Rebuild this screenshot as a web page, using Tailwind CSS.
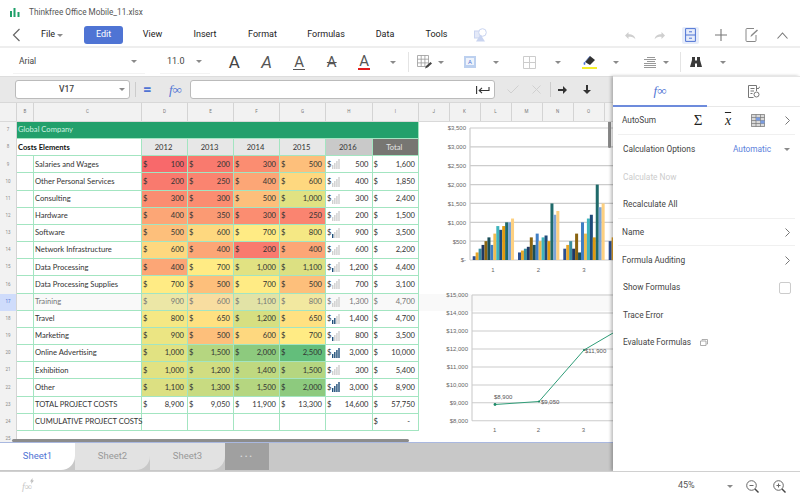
<!DOCTYPE html>
<html>
<head>
<meta charset="utf-8">
<script src="https://cdn.jsdelivr.net/npm/@tailwindcss/browser@4"></script>
</head>
<body class="m-0 bg-white">
<svg class="hidden">
  <symbol id="caret" viewBox="0 0 8 4"><path d="M0 0h8L4 4z" fill="#8a8a8a"/></symbol>
  <symbol id="b0" viewBox="0 0 8 10"><path d="M0 6h1.400v4H0zM2.100 4h1.400v6H2.100zM4.200 2h1.400v8H4.200zM6.300 0h1.400v10H6.300z" fill="#cfcfcf"/></symbol>
  <symbol id="b1" viewBox="0 0 8 10"><path d="M2.100 4h1.400v6H2.100zM4.200 2h1.400v8H4.200zM6.300 0h1.400v10H6.300z" fill="#cfcfcf"/><path d="M0 6h1.400v4H0z" fill="#1f4e79"/></symbol>
  <symbol id="b2" viewBox="0 0 8 10"><path d="M4.200 2h1.400v8H4.200zM6.300 0h1.400v10H6.300z" fill="#cfcfcf"/><path d="M0 6h1.400v4H0zM2.100 4h1.400v6H2.100z" fill="#1f4e79"/></symbol>
  <symbol id="b4" viewBox="0 0 8 10"><path d="M0 6h1.400v4H0zM2.100 4h1.400v6H2.100zM4.200 2h1.400v8H4.200zM6.300 0h1.400v10H6.300z" fill="#1f4e79"/></symbol>
</svg>
<div class="w-[800px] h-[500px] overflow-hidden flex flex-col font-['Roboto',sans-serif] text-[#333]">

  <!-- title -->
  <div class="h-[24px] flex items-center shrink-0">
    <svg class="ml-[10px] w-[10px] h-[9px] mt-[1px]" viewBox="0 0 10 9"><path d="M0 3h2v6H0zM3.500 0h2v9h-2zM7.500 4h2v5h-2z" fill="#1fa06a"/></svg>
    <span class="ml-[9px] text-[8.200px] text-[#555]">Thinkfree Office Mobile_11.xlsx</span>
  </div>

  <!-- menu -->
  <div class="h-[24px] shrink-0 flex items-center text-[9px] text-[#222] border-b-2 border-[#eeeeee]">
    <svg class="ml-[12px] w-[9px] h-[14px]" viewBox="0 0 9 14"><path d="M7.500 1 1.500 7l6 6" fill="none" stroke="#666" stroke-width="1.200"/></svg>
    <span class="ml-[20px] w-[16px]">File</span>
    <svg class="w-[6px] h-[3px]"><use href="#caret"/></svg>
    <span class="ml-[21px] w-[39px] h-[18px] rounded-[3px] bg-[#4f74d4] text-white flex items-center justify-center">Edit</span>
    <span class="w-[59px] text-center">View</span>
    <span class="w-[46px] text-center">Insert</span>
    <span class="w-[69px] text-center">Format</span>
    <span class="w-[58px] text-center">Formulas</span>
    <span class="w-[60px] text-center">Data</span>
    <span class="w-[43px] text-center">Tools</span>
    <svg class="ml-[16px] w-[13px] h-[14px]" viewBox="0 0 13 14"><rect x="0.500" y="3" width="7" height="7" fill="#e4e9f8" stroke="#c9d4f0"/><circle cx="8.500" cy="4.500" r="3.800" fill="#fff" stroke="#c9d4f0"/><path d="M6.500 6.500 11 13.500H2z" fill="#c9d4f0"/></svg>
    <div class="ml-auto flex items-center pr-[3px]">
      <div class="w-[30px] flex justify-center"><svg class="w-[12px] h-[9px]" viewBox="0 0 12 9"><path d="M1 4.500 4.500 1v2.200c4 0 6.500 1.600 6.800 5C9.800 6.200 8 5.700 4.500 5.700V8z" fill="#cfcfcf"/></svg></div>
      <div class="w-[30px] flex justify-center"><svg class="w-[12px] h-[9px]" viewBox="0 0 12 9"><path d="M11 4.500 7.500 1v2.200c-4 0-6.500 1.600-6.800 5C2.200 6.200 4 5.700 7.500 5.700V8z" fill="#cfcfcf"/></svg></div>
      <div class="w-[30px] flex justify-center"><div class="w-[17px] h-[17px] rounded-[2px] bg-[#e6ecfa] flex items-center justify-center"><svg class="w-[11px] h-[14px]" viewBox="0 0 11 14"><path d="M.6.600h9.800v12.800H.6zM.6 7h9.800M4 3.800h3M4 10.200h3" fill="none" stroke="#4f74d4"/></svg></div></div>
      <div class="w-[31px] flex justify-center"><svg class="w-[12px] h-[12px]" viewBox="0 0 12 12"><path d="M6 0v12M0 6h12" stroke="#777" stroke-width="1.100"/></svg></div>
      <div class="w-[31px] flex justify-center"><svg class="w-[13px] h-[14px]" viewBox="0 0 13 14"><path d="M11 7v5.500a1 1 0 0 1-1 1H2a1 1 0 0 1-1-1V1.500a1 1 0 0 1 1-1h7" fill="none" stroke="#888"/><path d="M5.500 9 6 7l6-5.500 1 1L7 8z" fill="#888"/></svg></div>
      <div class="w-[30px] flex justify-center"><svg class="w-[11px] h-[7px]" viewBox="0 0 11 7"><path d="m.5 6.500 5-5.500 5 5.500" fill="none" stroke="#777" stroke-width="1.100"/></svg></div>
    </div>
  </div>

  <!-- toolbar -->
  <div class="h-[28px] shrink-0 flex items-center text-[8.500px] text-[#444]">
    <div class="ml-[13px] w-[132px] h-[24px] flex items-center justify-between pl-[6px] pr-[8px] border-b border-[#f3f3f3]"><span>Arial</span><svg class="w-[6px] h-[3px]"><use href="#caret"/></svg></div>
    <div class="ml-[15px] w-[50px] h-[24px] flex items-center justify-between pl-[7px] pr-[8px] border-b border-[#f3f3f3]"><span class="text-[9px]">11.0</span><svg class="w-[6px] h-[3px]"><use href="#caret"/></svg></div>
    <div class="ml-[8px] w-[32.500px] text-center text-[17px] leading-none text-[#444]">A</div>
    <div class="w-[32.500px] text-center text-[17px] leading-none italic text-[#555]">A</div>
    <div class="w-[32.500px] flex justify-center"><span class="text-[15px] leading-[14px] text-[#555] border-b border-[#555] px-[1px]">A</span></div>
    <div class="w-[32.500px] text-center text-[15px] leading-none line-through text-[#555]">A</div>
    <div class="w-[32.500px] flex justify-center"><span class="text-[15px] leading-[14px] text-[#555] border-b-2 border-[#e21b1b] px-[1px]">A</span></div>
    <div class="w-[24px] flex justify-center"><svg class="w-[6px] h-[3px]"><use href="#caret"/></svg></div>
    <div class="ml-[3.500px] w-px h-[20px] bg-[#e4e4e4]"></div>
    <svg class="ml-[8px] w-[16px] h-[15px]" viewBox="0 0 16 15"><path d="M.5.500h11v11H.5zM4.200.500v11M7.900.500v11M.5 4.200h11M.5 7.900h11" fill="none" stroke="#999" stroke-width=".8"/><path d="m8 13.500 1-2.500 4.500-4 1.500 1.500-4.500 4z" fill="#444"/></svg>
    <div class="w-[15px] flex justify-center"><svg class="w-[6px] h-[3px]"><use href="#caret"/></svg></div>
    <svg class="ml-[16px] w-[12px] h-[12px]" viewBox="0 0 12 12"><path d="M0 0h12v12H0z" fill="#bcd0ef"/><path d="M2 2h8v7H2z" fill="#eef3fb"/><text x="6" y="8" text-anchor="middle" font-size="6" fill="#4f74d4">A</text></svg>
    <svg class="ml-[17px] w-[6px] h-[3px]"><use href="#caret"/></svg>
    <svg class="ml-[24px] w-[13px] h-[13px]" viewBox="0 0 13 13"><path d="M.5.500h12v12H.5zM6.500.500v12M.5 6.500h12" fill="none" stroke="#ccc"/></svg>
    <svg class="ml-[19px] w-[6px] h-[3px]"><use href="#caret"/></svg>
    <div class="ml-[21px] w-[15px] flex flex-col items-center"><svg class="w-[13px] h-[11px]" viewBox="0 0 13 11"><path d="m2 7 5-6 5 4-5 5z" fill="#333"/><path d="M1.500 10c-.8-1-.8-2 0-3 .8 1 .8 2 0 3zM2 7l5-6" fill="#4f74d4" stroke="#4f74d4" stroke-width=".6"/></svg><div class="w-[15px] h-[2px] bg-[#f4ee2a] mt-[1px]"></div></div>
    <svg class="ml-[16px] w-[6px] h-[3px]"><use href="#caret"/></svg>
    <svg class="ml-[25px] w-[12px] h-[11px]" viewBox="0 0 12 11"><path d="M3 .5h8M0 2.500h12M3 4.500h8M0 6.500h12M0 8.500h12M0 10.500h12" stroke="#999"/></svg>
    <svg class="ml-[7px] w-[6px] h-[3px]"><use href="#caret"/></svg>
    <div class="ml-[11px] w-px h-[20px] bg-[#e4e4e4]"></div>
    <svg class="ml-[8px] w-[14px] h-[11px]" viewBox="0 0 12 11"><path d="M2 0h3v3.500h2V0h3v3l2 7H7V6.500H5V10H0l2-7z" fill="#3a3a3a"/></svg>
    <svg class="ml-[17px] w-[6px] h-[3px]"><use href="#caret"/></svg>
  </div>

  <!-- main -->
  <div class="flex flex-1 min-h-0">
    <div class="w-[613px] shrink-0 flex flex-col min-h-0">
      <!-- formula bar -->
      <div class="h-[27px] shrink-0 flex items-center bg-[#e8e8e8] border-t border-[#dddddd] border-b border-b-[#d8d8d8]">
        <div class="ml-[15px] w-[115px] h-[19px] bg-white rounded-[3px] border border-[#bbbbbb] flex items-center text-[8.500px] font-medium text-[#444] relative"><span class="w-full text-center pr-[12px]">V17</span><svg class="absolute right-[4px] top-[7px] w-[6px] h-[3px]"><use href="#caret"/></svg></div>
        <div class="ml-[5px] w-px h-[15px] bg-[#cccccc]"></div>
        <span class="ml-[7px] w-[10px] text-[15px] leading-none text-[#4f74d4] font-bold">=</span>
        <span class="ml-[16px] w-[18px] text-[13px] italic text-[#4f74d4] font-['Liberation_Serif',serif] whitespace-nowrap">f∞</span>
        <div class="ml-[3px] w-[305px] h-[19px] bg-white rounded-[3px] border border-[#bbbbbb] flex items-center justify-end pr-[4px]"><svg class="w-[14px] h-[8px]" viewBox="0 0 14 8"><path d="M.6 0v8M13 1v3.500H3.500M6 1.800 3.200 4.500 6 7.200" fill="none" stroke="#333" stroke-width="1.100"/></svg></div>
        <svg class="ml-[12px] w-[12px] h-[9px]" viewBox="0 0 12 9"><path d="m.5 4.500 3.500 3.500 7.500-7.500" fill="none" stroke="#d0d0d0"/></svg>
        <svg class="ml-[13px] w-[9px] h-[9px]" viewBox="0 0 9 9"><path d="m.5.500 8 8M8.500.500l-8 8" fill="none" stroke="#d0d0d0"/></svg>
        <div class="ml-[9px] w-px h-[15px] bg-[#cccccc]"></div>
        <svg class="ml-[7px] w-[9px] h-[8px]" viewBox="0 0 9 8"><path d="M0 3h5V0l4 4-4 4V5H0z" fill="#333"/></svg>
        <svg class="ml-[16px] w-[8px] h-[9px]" viewBox="0 0 8 9"><path d="M3 0v5H0l4 4 4-4H5V0z" fill="#333"/></svg>
      </div>
      <!-- column header -->
      <div class="h-[19px] shrink-0 flex bg-[#f2f2f2] border-b border-[#d9d9d9] text-[4.500px] text-[#777] [&>div]:flex [&>div]:items-center [&>div]:justify-center [&>div]:border-r [&>div]:border-[#d4d4d4]">
        <div class="w-[17px]"></div><div class="w-[17px]">B</div><div class="w-[108px]">C</div><div class="w-[46px]">D</div><div class="w-[46px]">E</div><div class="w-[46px]">F</div><div class="w-[46px]">G</div><div class="w-[46.500px]">H</div><div class="w-[46.500px]">I</div><div class="w-[30.500px]">J</div><div class="w-[31px]">K</div><div class="w-[31px]">L</div><div class="w-[31px]">M</div><div class="w-[31px]">N</div><div class="w-[31px]">O</div>
      </div>
      <!-- sheet -->
      <div class="relative flex flex-1 min-h-0 overflow-hidden">
        <div class="w-[17px] shrink-0 bg-[#f2f2f2] border-r border-[#d4d4d4] flex flex-col text-[4.500px] text-[#888] [&>div]:h-[17.170px] [&>div]:shrink-0 [&>div]:flex [&>div]:items-center [&>div]:justify-center">
          <div>7</div><div>8</div><div>9</div><div>10</div><div>11</div><div>12</div><div>13</div><div>14</div><div>15</div><div>16</div><div class="bg-[#cfdcfb] text-[#4f74d4]">17</div><div>18</div><div>19</div><div>20</div><div>21</div><div>22</div><div>23</div><div>24</div><div>25</div>
        </div>
        <div class="relative w-[402px] shrink-0 self-start grid grid-cols-[17px_108px_46px_46px_46px_46px_46.500px_46.500px] auto-rows-[17.170px] font-['Lato',sans-serif] text-[7.600px] text-[#333] [&>div]:flex [&>div]:items-center [&>div]:justify-between [&>div]:pl-[1px] [&>div]:pr-[3px] [&>div]:border-r [&>div]:border-b [&>div]:border-[#a3e5c1] [&>div]:whitespace-nowrap">
          <div class="col-span-8 bg-[#22a06b] text-[#cdf1e0]">Global Company</div>
          <div class="col-span-2 font-bold text-[#111]">Costs Elements</div>
          <div class="bg-[#e7e7e7] justify-center!">2012</div><div class="bg-[#e7e7e7] justify-center!">2013</div><div class="bg-[#e7e7e7] justify-center!">2014</div><div class="bg-[#e7e7e7] justify-center!">2015</div><div class="bg-[#c9c9c9] justify-center!">2016</div><div class="bg-[#777672] text-[#e4e4e4] justify-center!">Total</div>

          <div></div><div>Salaries and Wages</div><div class="bg-[#f8696b]"><span>$</span><span>100</span></div><div class="bg-[#f97a6e]"><span>$</span><span>200</span></div><div class="bg-[#fb8d71]"><span>$</span><span>300</span></div><div class="bg-[#fdbf7b]"><span>$</span><span>500</span></div><div><span class="flex items-center gap-[1px]">$<svg class="w-[8px] h-[10px]"><use href="#b0"/></svg></span><span>500</span></div><div><span>$</span><span>1,600</span></div>

          <div></div><div>Other Personal Services</div><div class="bg-[#f97a6e]"><span>$</span><span>200</span></div><div class="bg-[#fa8470]"><span>$</span><span>250</span></div><div class="bg-[#fca676]"><span>$</span><span>400</span></div><div class="bg-[#fed87f]"><span>$</span><span>600</span></div><div><span class="flex items-center gap-[1px]">$<svg class="w-[8px] h-[10px]"><use href="#b0"/></svg></span><span>400</span></div><div><span>$</span><span>1,850</span></div>

          <div></div><div>Consulting</div><div class="bg-[#fb8d71]"><span>$</span><span>300</span></div><div class="bg-[#fb8d71]"><span>$</span><span>300</span></div><div class="bg-[#fdbf7b]"><span>$</span><span>500</span></div><div class="bg-[#e1e282]"><span>$</span><span>1,000</span></div><div><span class="flex items-center gap-[1px]">$<svg class="w-[8px] h-[10px]"><use href="#b0"/></svg></span><span>300</span></div><div><span>$</span><span>2,400</span></div>

          <div></div><div>Hardware</div><div class="bg-[#fca676]"><span>$</span><span>400</span></div><div class="bg-[#fb9a73]"><span>$</span><span>350</span></div><div class="bg-[#fb8d71]"><span>$</span><span>300</span></div><div class="bg-[#fa8470]"><span>$</span><span>250</span></div><div><span class="flex items-center gap-[1px]">$<svg class="w-[8px] h-[10px]"><use href="#b0"/></svg></span><span>200</span></div><div><span>$</span><span>1,500</span></div>

          <div></div><div>Software</div><div class="bg-[#fdbf7b]"><span>$</span><span>500</span></div><div class="bg-[#fed87f]"><span>$</span><span>600</span></div><div class="bg-[#ffeb84]"><span>$</span><span>700</span></div><div class="bg-[#f5e884]"><span>$</span><span>800</span></div><div><span class="flex items-center gap-[1px]">$<svg class="w-[8px] h-[10px]"><use href="#b1"/></svg></span><span>900</span></div><div><span>$</span><span>3,500</span></div>

          <div></div><div>Network Infrastructure</div><div class="bg-[#fed87f]"><span>$</span><span>600</span></div><div class="bg-[#fca676]"><span>$</span><span>400</span></div><div class="bg-[#f97a6e]"><span>$</span><span>200</span></div><div class="bg-[#fca676]"><span>$</span><span>400</span></div><div><span class="flex items-center gap-[1px]">$<svg class="w-[8px] h-[10px]"><use href="#b0"/></svg></span><span>600</span></div><div><span>$</span><span>2,200</span></div>

          <div></div><div>Data Processing</div><div class="bg-[#fca676]"><span>$</span><span>400</span></div><div class="bg-[#ffeb84]"><span>$</span><span>700</span></div><div class="bg-[#e1e282]"><span>$</span><span>1,000</span></div><div class="bg-[#dce082]"><span>$</span><span>1,100</span></div><div><span class="flex items-center gap-[1px]">$<svg class="w-[8px] h-[10px]"><use href="#b1"/></svg></span><span>1,200</span></div><div><span>$</span><span>4,400</span></div>

          <div></div><div>Data Processing Supplies</div><div class="bg-[#ffeb84]"><span>$</span><span>700</span></div><div class="bg-[#fdbf7b]"><span>$</span><span>500</span></div><div class="bg-[#ffeb84]"><span>$</span><span>700</span></div><div class="bg-[#fdbf7b]"><span>$</span><span>500</span></div><div><span class="flex items-center gap-[1px]">$<svg class="w-[8px] h-[10px]"><use href="#b0"/></svg></span><span>700</span></div><div><span>$</span><span>3,100</span></div>

          <div class="bg-[#f9f9f9]"></div><div class="bg-[#f9f9f9] text-[#777]">Training</div><div class="bg-[#ece7a6] text-[#777]"><span>$</span><span>900</span></div><div class="bg-[#f8dda0] text-[#777]"><span>$</span><span>600</span></div><div class="bg-[#e2e3a6] text-[#777]"><span>$</span><span>1,100</span></div><div class="bg-[#f2e8a0] text-[#777]"><span>$</span><span>800</span></div><div class="bg-[#f9f9f9] text-[#777]"><span class="flex items-center gap-[1px]">$<svg class="w-[8px] h-[10px]"><use href="#b0"/></svg></span><span>1,300</span></div><div class="bg-[#f9f9f9] text-[#777]"><span>$</span><span>4,700</span></div>

          <div></div><div>Travel</div><div class="bg-[#f5e884]"><span>$</span><span>800</span></div><div class="bg-[#ffe181]"><span>$</span><span>650</span></div><div class="bg-[#d7df81]"><span>$</span><span>1,200</span></div><div class="bg-[#ffe181]"><span>$</span><span>650</span></div><div><span class="flex items-center gap-[1px]">$<svg class="w-[8px] h-[10px]"><use href="#b2"/></svg></span><span>1,400</span></div><div><span>$</span><span>4,700</span></div>

          <div></div><div>Marketing</div><div class="bg-[#ebe583]"><span>$</span><span>900</span></div><div class="bg-[#fdbf7b]"><span>$</span><span>500</span></div><div class="bg-[#fed87f]"><span>$</span><span>600</span></div><div class="bg-[#ffeb84]"><span>$</span><span>700</span></div><div><span class="flex items-center gap-[1px]">$<svg class="w-[8px] h-[10px]"><use href="#b1"/></svg></span><span>800</span></div><div><span>$</span><span>3,500</span></div>

          <div></div><div>Online Advertising</div><div class="bg-[#e1e282]"><span>$</span><span>1,000</span></div><div class="bg-[#b5d680]"><span>$</span><span>1,500</span></div><div class="bg-[#8dca7e]"><span>$</span><span>2,000</span></div><div class="bg-[#63be7b]"><span>$</span><span>2,500</span></div><div><span class="flex items-center gap-[1px]">$<svg class="w-[8px] h-[10px]"><use href="#b4"/></svg></span><span>3,000</span></div><div><span>$</span><span>10,000</span></div>

          <div></div><div>Exhibition</div><div class="bg-[#e1e282]"><span>$</span><span>1,000</span></div><div class="bg-[#d1dd81]"><span>$</span><span>1,200</span></div><div class="bg-[#bfd980]"><span>$</span><span>1,400</span></div><div class="bg-[#b5d680]"><span>$</span><span>1,500</span></div><div><span class="flex items-center gap-[1px]">$<svg class="w-[8px] h-[10px]"><use href="#b0"/></svg></span><span>300</span></div><div><span>$</span><span>5,400</span></div>

          <div></div><div>Other</div><div class="bg-[#dce082]"><span>$</span><span>1,100</span></div><div class="bg-[#c8db81]"><span>$</span><span>1,300</span></div><div class="bg-[#b5d680]"><span>$</span><span>1,500</span></div><div class="bg-[#8dca7e]"><span>$</span><span>2,000</span></div><div><span class="flex items-center gap-[1px]">$<svg class="w-[8px] h-[10px]"><use href="#b4"/></svg></span><span>3,000</span></div><div><span>$</span><span>8,900</span></div>

          <div></div><div>TOTAL PROJECT COSTS</div><div><span>$</span><span>8,900</span></div><div><span>$</span><span>9,050</span></div><div><span>$</span><span>11,900</span></div><div><span>$</span><span>13,300</span></div><div><span>$</span><span>14,600</span></div><div><span>$</span><span>57,750</span></div>

          <div></div><div>CUMULATIVE PROJECT COSTS</div><div></div><div></div><div></div><div></div><div></div><div class="pr-[8px]!"><span>$</span><span>-</span></div>
        </div>

        <!-- selected row band and floating charts -->
        <div class="flex-1 relative">
          <div class="absolute left-0 right-0 top-[171.700px] h-[17.170px] bg-[#f9f9f9]"></div>
          <svg class="absolute left-0 top-0 w-[194px] h-[340px]" viewBox="419 122 194 340" font-family="Liberation Sans, sans-serif">
            <g stroke="#cccccc" stroke-width="1.200">
              <path d="M470 128H613M470 146.900H613M470 165.700H613M470 184.600H613M470 203.400H613M470 222.300H613M470 241.100H613M470 260H613M470 128V260" fill="none"/>
            </g>
            <g font-size="6" fill="#666" text-anchor="end">
              <text x="466" y="130">$3,500</text><text x="466" y="149">$3,000</text><text x="466" y="168">$2,500</text><text x="466" y="187">$2,000</text><text x="466" y="205.500">$1,500</text><text x="466" y="224.500">$1,000</text><text x="466" y="243.500">$500</text><text x="466" y="262">$-</text>
            </g>
            <g font-size="6" fill="#666" text-anchor="middle"><text x="493" y="272">1</text><text x="538.500" y="272">2</text><text x="584" y="272">3</text></g>
            <g transform="translate(0,260) scale(1,-0.0377)">
              <g fill="#2a4d8f"><rect x="472.700" width="3" height="100"/><rect x="518" width="3" height="200"/><rect x="563.300" width="3" height="300"/><rect x="608.700" width="3" height="500"/></g>
              <g fill="#e8a72a"><rect x="475.650" width="3" height="200"/><rect x="520.950" width="3" height="250"/><rect x="566.250" width="3" height="400"/><rect x="611.650" width="2" height="600"/></g>
              <g fill="#3a8fa0"><rect x="478.600" width="3" height="300"/><rect x="523.900" width="3" height="300"/><rect x="569.200" width="3" height="500"/></g>
              <g fill="#1f3864"><rect x="481.550" width="3" height="400"/><rect x="526.850" width="3" height="350"/><rect x="572.150" width="3" height="300"/></g>
              <g fill="#8a6410"><rect x="484.500" width="3" height="500"/><rect x="529.800" width="3" height="600"/><rect x="575.100" width="3" height="700"/></g>
              <g fill="#1b4e58"><rect x="487.450" width="3" height="600"/><rect x="532.750" width="3" height="400"/><rect x="578.050" width="3" height="200"/></g>
              <g fill="#3f7ec4"><rect x="490.400" width="3" height="400"/><rect x="535.700" width="3" height="700"/><rect x="581" width="3" height="1000"/></g>
              <g fill="#f0bc50"><rect x="493.350" width="3" height="700"/><rect x="538.650" width="3" height="500"/><rect x="583.950" width="3" height="700"/></g>
              <g fill="#3eb4bc"><rect x="496.300" width="3" height="900"/><rect x="541.600" width="3" height="600"/><rect x="586.900" width="3" height="1100"/></g>
              <g fill="#1f4a7a"><rect x="499.250" width="3" height="800"/><rect x="544.550" width="3" height="650"/><rect x="589.850" width="3" height="1200"/></g>
              <g fill="#e09a10"><rect x="502.200" width="3" height="900"/><rect x="547.500" width="3" height="500"/><rect x="592.800" width="3" height="600"/></g>
              <g fill="#1f6a6a"><rect x="505.150" width="3" height="1000"/><rect x="550.450" width="3" height="1500"/><rect x="595.750" width="3" height="2000"/></g>
              <g fill="#7ea6d8"><rect x="508.100" width="3" height="1000"/><rect x="553.400" width="3" height="1200"/><rect x="598.700" width="3" height="1400"/></g>
              <g fill="#fdd080"><rect x="511.050" width="3" height="1100"/><rect x="556.350" width="3" height="1300"/><rect x="601.650" width="3" height="1500"/></g>
            </g>

            <g stroke="#cccccc" stroke-width="1.100" fill="none">
              <path d="M472 295H613M472 313H613M472 331H613M472 349H613M472 367H613M472 385H613M472 402.700H613M472 420.700H613M472 295V420.700"/>
            </g>
            <g font-size="6" fill="#666" text-anchor="end">
              <text x="468" y="297">$15,000</text><text x="468" y="315">$14,000</text><text x="468" y="333">$13,000</text><text x="468" y="351">$12,000</text><text x="468" y="369">$11,000</text><text x="468" y="387">$10,000</text><text x="468" y="404.700">$9,000</text><text x="468" y="422.700">$8,000</text>
            </g>
            <g font-size="6" fill="#666" text-anchor="middle"><text x="494.700" y="432">1</text><text x="538.300" y="432">2</text><text x="583.500" y="432">3</text></g>
            <path d="M495 404.500 539 401.500 584 350 613 333" fill="none" stroke="#2f9d78" stroke-width="1"/>
            <circle cx="495" cy="404.500" r="1.400" fill="#1f8a68"/><circle cx="539" cy="401.500" r="1.100" fill="#1f8a68"/><circle cx="584" cy="350" r="1.100" fill="#1f8a68"/>
            <g font-size="6" fill="#555"><text x="494" y="399">$8,900</text><text x="541" y="404">$9,050</text><text x="585" y="353">$11,900</text></g>
          </svg>
          <div class="absolute left-[189px] top-[-10px] w-[3px] h-[36px] bg-[#8a8a8a] rounded-full"></div>
        </div>
        <!-- horizontal scrollbar -->
        <div class="absolute left-[12px] top-[317px] w-[397px] h-[2.500px] bg-[#8c8c8c] rounded-full"></div>
        <!-- tabs -->
        <div class="absolute left-0 right-0 bottom-0 h-[29px] bg-[#c8c8c8] border-t border-[#a9b8e0] flex text-[9.500px] [&>div]:h-[27px] [&>div]:w-[75px] [&>div]:flex [&>div]:items-center [&>div]:justify-center [&>div]:rounded-br-[14px]">
          <div class="bg-white text-[#4f74d4]">Sheet1</div>
          <div class="bg-[#e2e2e2] text-[#999]">Sheet2</div>
          <div class="bg-[#e2e2e2] text-[#999]">Sheet3</div>
          <div class="w-[44px]! bg-[#a0a0a0] text-[#d8d8d8] rounded-none! tracking-[2px] text-[8px]">•••</div>
        </div>
      </div>
    </div>

    <!-- side panel -->
    <div class="w-[187px] shrink-0 relative bg-white shadow-[-2px_0_3px_rgba(0,0,0,0.25)] flex flex-col text-[8.300px] text-[#444] border-t border-[#e6e6e6]">
      <div class="h-[30px] shrink-0 flex border-b border-[#e8e8e8]">
        <div class="w-[94px] h-[30px] flex items-center justify-center border-b-2 border-[#6d8bdc]"><span class="text-[13px] italic text-[#4f74d4] font-['Liberation_Serif',serif]">f∞</span></div>
        <div class="flex-1 flex items-center justify-center"><svg class="w-[12px] h-[13px]" viewBox="0 0 12 13"><path d="M8.500 6V.5H.5v12h5M2.500 3.500h4M2.500 6h3.500M2.500 8.500h2" fill="none" stroke="#777"/><circle cx="8.500" cy="9.500" r="2.500" fill="none" stroke="#777"/><path d="m9 3 1 1 2-2.500" fill="none" stroke="#777"/></svg></div>
      </div>
      <div class="mx-[5px] h-[28px] shrink-0 flex items-center border-b border-[#f0f0f0] pl-[4px]">
        <span class="w-[69px]">AutoSum</span>
        <span class="w-[14px] text-center text-[15px] font-['Liberation_Serif',serif] text-[#222]">Σ</span>
        <span class="ml-[16px] w-[14px] text-center text-[14px] italic font-['Liberation_Serif',serif] text-[#222] overline">x</span>
        <svg class="ml-[16px] w-[14px] h-[13px]" viewBox="0 0 14 13"><path d="M0 0h14v13H0z" fill="#d8d8d8"/><path d="M.5.500h13v12H.5zM.5 3.500h13M.5 6.500h13M.5 9.500h13M5 .5v12M9.500.500v12" fill="none" stroke="#777" stroke-width=".7"/><path d="M5 3.500h4v3H5zM9.500 6.500h4v3h-4z" fill="#7a9ce0"/></svg>
        <svg class="ml-[19.500px] w-[5px] h-[9px]" viewBox="0 0 5 9"><path d="m.5.500 4 4-4 4" fill="none" stroke="#777"/></svg>
      </div>
      <div class="h-[28px] shrink-0 flex items-center pl-[10px]"><span class="w-[110px]">Calculation Options</span><span class="w-[51px] text-[#5d7fdc]">Automatic</span><svg class="w-[6px] h-[3px]"><use href="#caret"/></svg></div>
      <div class="h-[28px] shrink-0 flex items-center pl-[10px] text-[#cccccc]">Calculate Now</div>
      <div class="mx-[5px] h-[28px] shrink-0 flex items-center pl-[5px] border-b border-[#f0f0f0]">Recalculate All</div>
      <div class="mx-[5px] h-[27px] shrink-0 flex items-center justify-between pl-[4px] pr-[5.500px] border-b border-[#f0f0f0]"><span>Name</span><svg class="w-[5px] h-[9px]" viewBox="0 0 5 9"><path d="m.5.500 4 4-4 4" fill="none" stroke="#777"/></svg></div>
      <div class="mx-[5px] h-[28px] shrink-0 flex items-center justify-between pl-[4px] pr-[5.500px]"><span>Formula Auditing</span><svg class="w-[5px] h-[9px]" viewBox="0 0 5 9"><path d="m.5.500 4 4-4 4" fill="none" stroke="#777"/></svg></div>
      <div class="h-[27px] shrink-0 flex items-center justify-between pl-[10px] pr-[9px]"><span>Show Formulas</span><span class="w-[12px] h-[12px] rounded-[2px] border border-[#cccccc]"></span></div>
      <div class="h-[28px] shrink-0 flex items-center pl-[10px]">Trace Error</div>
      <div class="h-[27px] shrink-0 flex items-center pl-[10px]"><span>Evaluate Formulas</span><svg class="ml-[9px] w-[8px] h-[7px]" viewBox="0 0 8 7"><path d="M2 1.500V.5h5.500v4.500H6.500M.5 2h5.500v4.500H.5z" fill="#fff" stroke="#999" stroke-width=".8"/></svg></div>
    </div>
  </div>

  <!-- status -->
  <div class="h-[29px] shrink-0 flex items-center border-t border-[#d0d0d0] bg-white relative z-10 text-[9px] text-[#555]">
    <span class="ml-[22px] w-[12px] relative text-[10px] italic text-[#c8c8c8] font-['Liberation_Serif',serif]">f∞<svg class="absolute right-0 top-[-1px] w-[4px] h-[6px]" viewBox="0 0 4 6"><path d="M2.500 0 0 3.500h1.500L1 6l3-3.500H2.500z" fill="#bdbdbd"/></svg></span>
    <span class="ml-[644px] w-[16px]">45%</span>
    <svg class="ml-[33px] w-[6px] h-[3px]"><use href="#caret"/></svg>
    <svg class="ml-[13px] w-[13px] h-[13px]" viewBox="0 0 13 13"><circle cx="5.500" cy="5.500" r="4.800" fill="none" stroke="#666"/><path d="m9 9 3.500 3.500" stroke="#444" stroke-width="1.400"/><path d="M3.500 5.500h4" stroke="#666"/></svg>
    <svg class="ml-[14px] w-[13px] h-[13px]" viewBox="0 0 13 13"><circle cx="5.500" cy="5.500" r="4.800" fill="none" stroke="#666"/><path d="m9 9 3.500 3.500" stroke="#444" stroke-width="1.400"/><path d="M3.500 5.500h4M5.500 3.500v4" stroke="#666"/></svg>
  </div>
</div>
</body>
</html>
